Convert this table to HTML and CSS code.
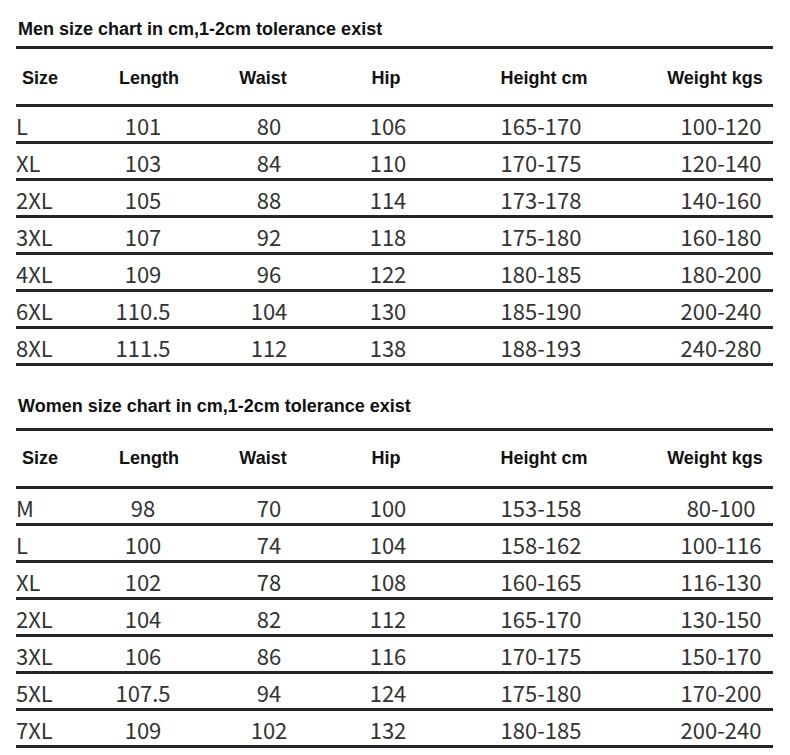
FILE: index.html
```html
<!DOCTYPE html>
<html lang="en">
<head>
<meta charset="utf-8">
<title>Size chart</title>
<link rel="stylesheet" href="styles.css">
</head>
<body>
<section class="chart">
  <h2 class="chart-title">Men size chart in cm,1-2cm tolerance exist</h2>
  <div class="row head">
    <div>Size</div><div>Length</div><div>Waist</div><div>Hip</div><div>Height cm</div><div>Weight kgs</div>
  </div>
  <div class="row"><div>L</div><div>101</div><div>80</div><div>106</div><div>165-170</div><div>100-120</div></div>
  <div class="row"><div>XL</div><div>103</div><div>84</div><div>110</div><div>170-175</div><div>120-140</div></div>
  <div class="row"><div>2XL</div><div>105</div><div>88</div><div>114</div><div>173-178</div><div>140-160</div></div>
  <div class="row"><div>3XL</div><div>107</div><div>92</div><div>118</div><div>175-180</div><div>160-180</div></div>
  <div class="row"><div>4XL</div><div>109</div><div>96</div><div>122</div><div>180-185</div><div>180-200</div></div>
  <div class="row"><div>6XL</div><div>110.5</div><div>104</div><div>130</div><div>185-190</div><div>200-240</div></div>
  <div class="row"><div>8XL</div><div>111.5</div><div>112</div><div>138</div><div>188-193</div><div>240-280</div></div>
</section>
<section class="chart">
  <h2 class="chart-title chart-title--second">Women size chart in cm,1-2cm tolerance exist</h2>
  <div class="row head head--second">
    <div>Size</div><div>Length</div><div>Waist</div><div>Hip</div><div>Height cm</div><div>Weight kgs</div>
  </div>
  <div class="row"><div>M</div><div>98</div><div>70</div><div>100</div><div>153-158</div><div>80-100</div></div>
  <div class="row"><div>L</div><div>100</div><div>74</div><div>104</div><div>158-162</div><div>100-116</div></div>
  <div class="row"><div>XL</div><div>102</div><div>78</div><div>108</div><div>160-165</div><div>116-130</div></div>
  <div class="row"><div>2XL</div><div>104</div><div>82</div><div>112</div><div>165-170</div><div>130-150</div></div>
  <div class="row"><div>3XL</div><div>106</div><div>86</div><div>116</div><div>170-175</div><div>150-170</div></div>
  <div class="row"><div>5XL</div><div>107.5</div><div>94</div><div>124</div><div>175-180</div><div>170-200</div></div>
  <div class="row"><div>7XL</div><div>109</div><div>102</div><div>132</div><div>180-185</div><div>200-240</div></div>
</section>
</body>
</html>
```

FILE: styles.css
```css
html, body {
  margin: 0;
  padding: 0;
  background: #ffffff;
}

.chart {
  width: 757px;
  margin-left: 16px;
}

.chart-title {
  margin: 0;
  padding: 20px 0 8px 2px;
  height: 18px;
  line-height: 18px;
  font-family: "Liberation Sans", Arial, sans-serif;
  font-weight: bold;
  font-size: 18px;
  color: #111111;
  border-bottom: 3px solid #252525;
}

.chart-title--second {
  padding-top: 31px;
  padding-bottom: 13px;
}

.row {
  display: grid;
  grid-template-columns: 70px 114px 138px 100px 206px 1fr;
  align-items: center;
  height: 34px;
  border-bottom: 3px solid #252525;
  font-family: "Noto Sans CJK SC", "Noto Sans", sans-serif;
  font-size: 22px;
  color: #333333;
}

.row > div {
  text-align: center;
  white-space: nowrap;
  line-height: 1;
  padding-top: 2px;
}

.row > div:first-child {
  text-align: left;
}

.row > div:last-child {
  padding-left: 25px;
}

.row.head {
  grid-template-columns: 70px 126px 102px 144px 172px 1fr;
  height: 55px;
  font-family: "Liberation Sans", Arial, sans-serif;
  font-weight: bold;
  font-size: 18px;
  color: #111111;
}

.row.head > div {
  padding-top: 2px;
}

.row.head.head--second > div {
  padding-top: 0;
  padding-bottom: 1px;
}

.row.head > div:first-child {
  padding-left: 6px;
}

.row.head > div:last-child {
  padding-left: 27px;
}
```
